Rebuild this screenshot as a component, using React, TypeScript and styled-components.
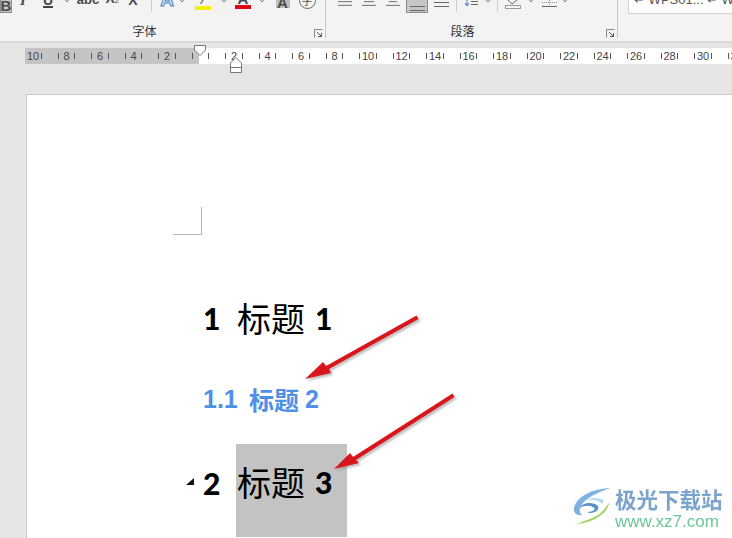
import React from "react";
import styled, { createGlobalStyle } from "styled-components";

const GlobalStyle = createGlobalStyle`
  html, body {
    margin: 0;
    padding: 0;
    background: #e6e6e6;
  }
`;

const CJK = `"Noto Sans CJK SC", sans-serif`;

const Screen = styled.div`
  position: relative;
  width: 732px;
  height: 538px;
  overflow: hidden;
  background: #e6e6e6;
  font-family: "Liberation Sans", ${CJK};
`;

const Ribbon = styled.div`
  display: flex;
  height: 41px;
  overflow: hidden;
  background: #f3f3f3;
  border-bottom: 2px solid #dadada;
`;

const Group = styled.div<{ $w: number }>`
  position: relative;
  display: flex;
  flex-direction: column;
  width: ${(p) => p.$w}px;
  height: 38px;
  box-sizing: border-box;
  border-right: 1px solid #c4c4c4;
`;

const ToolRow = styled.div`
  display: flex;
  align-items: flex-start;
  height: 23px;
`;

const Slot = styled.div<{ $w: number; $h?: number }>`
  display: flex;
  flex: none;
  align-items: flex-end;
  justify-content: center;
  width: ${(p) => p.$w}px;
  height: ${(p) => p.$h ?? 8}px;
  color: #444;
`;

const ActiveBox = styled.div<{ $w: number }>`
  display: flex;
  flex: none;
  align-items: flex-end;
  justify-content: center;
  width: ${(p) => p.$w}px;
  height: 13px;
  box-sizing: border-box;
  background: #c6c6c6;
  border: 1px solid #8b8b8b;
  border-top: none;
`;

const Glyph = styled.span<{ $serif?: boolean; $italic?: boolean; $size?: number; $under?: boolean; $strike?: boolean }>`
  font-family: ${(p) => (p.$serif ? `"Liberation Serif", serif` : `"Liberation Sans", sans-serif`)};
  font-style: ${(p) => (p.$italic ? "italic" : "normal")};
  font-weight: 700;
  font-size: ${(p) => p.$size ?? 14}px;
  line-height: 12px;
  color: #4a4a4a;
  text-decoration: ${(p) => (p.$strike ? "line-through" : "none")};
  border-bottom: ${(p) => (p.$under ? "2px solid #444" : "none")};
`;

const Sub = styled.span`
  font-size: 7px;
  font-weight: 400;
`;

const OutlineA = styled.span`
  font-family: "Liberation Sans", sans-serif;
  font-weight: 700;
  font-size: 19px;
  line-height: 14px;
  color: #d5e5f6;
  -webkit-text-stroke: 1px #4f86c6;
`;

const BarIcon = styled.div<{ $bar: string; $w?: number }>`
  display: flex;
  justify-content: center;
  align-items: flex-end;
  width: ${(p) => p.$w ?? 16}px;
  height: 10px;
  border-bottom: 4px solid ${(p) => p.$bar};
`;

const GreyA = styled.span`
  width: 14px;
  height: 8px;
  text-align: center;
  background: #bdbdbd;
  font-weight: 700;
  font-size: 15px;
  line-height: 6px;
  color: #4d4d4d;
`;

const CircleChar = styled.span`
  flex: none;
  width: 15px;
  height: 15px;
  border: 1px solid #666;
  border-radius: 50%;
  text-align: center;
  font-family: ${CJK};
  font-size: 11px;
  line-height: 15px;
  color: #555;
`;

const Separator = styled.div`
  width: 1px;
  height: 12px;
  background: #cdcdcd;
`;

const GroupLabel = styled.div<{ $shift: number }>`
  padding-right: ${(p) => p.$shift}px;
  text-align: center;
  font-family: ${CJK};
  font-size: 12px;
  line-height: 15px;
  color: #333;
`;

const Launcher = styled.svg`
  position: absolute;
  right: 2px;
  bottom: 0;
`;

const StyleGallery = styled.div`
  display: flex;
  flex: none;
  gap: 13px;
  width: 104px;
  height: 14px;
  margin-left: 10px;
  padding-left: 5px;
  box-sizing: border-box;
  overflow: hidden;
  background: #fff;
  border: 1px solid #d2d2d2;
  border-top: none;
  border-right: none;
  align-items: flex-start;
`;

const StyleName = styled.span`
  flex: none;
  width: 60px;
  margin-top: -5px;
  font-size: 13px;
  line-height: 9px;
  color: #555;
  white-space: nowrap;
`;

const RulerBand = styled.div`
  height: 51px;
  padding-top: 5px;
  box-sizing: border-box;
`;

const Ruler = styled.div`
  position: relative;
  display: flex;
  height: 16px;
  margin-left: 25px;
  background: linear-gradient(to right, #c4c4c4 174px, #fff 174px);
`;

const RulerTrack = styled.div`
  display: flex;
  margin-left: -8.75px;
  overflow: visible;
`;

const RulerCell = styled.div`
  display: flex;
  flex: none;
  justify-content: space-between;
  align-items: center;
  width: 33.5px;
  padding: 0 8px;
  box-sizing: border-box;
  font-size: 11px;
  color: #444;
`;

const Tick = styled.span`
  width: 1px;
  height: 6px;
  background: #555;
`;

const Marker = styled.svg<{ $left: number; $top: number }>`
  position: absolute;
  left: ${(p) => p.$left}px;
  top: ${(p) => p.$top}px;
`;

const RulerClip = styled.div`
  display: flex;
  width: 707px;
  overflow: hidden;
`;

const Page = styled.div`
  height: 444px;
  margin-left: 26px;
  padding-top: 112px;
  box-sizing: border-box;
  background: #fff;
  border-top: 1px solid #c9c9c9;
  border-left: 1px solid #c9c9c9;
  color: #000;
`;

const CornerMark = styled.div`
  width: 29px;
  height: 28px;
  margin-left: 146px;
  box-sizing: border-box;
  border-right: 1px solid #b5b5b5;
  border-bottom: 1px solid #b5b5b5;
`;

const Headings = styled.div`
  display: flex;
  flex-direction: column;
  margin-left: 176px;
`;

const Heading = styled.div<{ $top: number }>`
  display: flex;
  align-items: center;
  height: 50px;
  margin-top: ${(p) => p.$top}px;
  white-space: nowrap;
`;

const Num = styled.span<{ $w: number; $lift?: number }>`
  flex: none;
  width: ${(p) => p.$w}px;
  margin-bottom: ${(p) => p.$lift ?? 0}px;
  font-family: "Lato", sans-serif;
  font-weight: 900;
  font-size: 30px;
`;

const Title = styled.span`
  font-family: ${CJK};
  font-weight: 400;
  font-size: 34px;
  line-height: 50px;
`;

const TitleDigit = styled.span`
  font-family: "Lato", sans-serif;
  font-weight: 900;
  font-size: 30px;
  margin-left: 10px;
`;

const BlueHeading = styled.div`
  display: flex;
  align-items: center;
  height: 30px;
  margin-top: 41px;
  color: #4f8fe6;
  font-family: "Liberation Sans", ${CJK};
  font-weight: 700;
  font-size: 25px;
  white-space: nowrap;
`;

const BlueNum = styled.span`
  flex: none;
  width: 46px;
`;

const BlueTitle = styled.span`
  font-family: ${CJK};
  font-size: 25px;
  margin-right: 6px;
`;

const Heading3 = styled.div`
  display: flex;
  align-items: center;
  height: 93px;
  margin-top: 30px;
  margin-left: -17px;
  white-space: nowrap;
`;

const Collapse = styled.span`
  flex: none;
  width: 0;
  height: 0;
  margin-right: 9px;
  margin-bottom: 18px;
  border-style: solid;
  border-width: 0 0 7px 8px;
  border-color: transparent transparent #111 transparent;
`;

const Shaded = styled.span`
  display: flex;
  align-items: center;
  height: 93px;
  width: 111px;
  padding: 0 0 18px 1px;
  box-sizing: border-box;
  background: #c3c3c3;
`;

const ArrowLayer = styled.svg`
  position: absolute;
  left: 0;
  top: 0;
  pointer-events: none;
`;

const Watermark = styled.div`
  position: absolute;
  left: 572px;
  top: 486px;
  display: flex;
  gap: 3px;
  filter: blur(0.5px);
`;

const WatermarkText = styled.div`
  display: flex;
  flex-direction: column;
`;

const SiteName = styled.div`
  font-family: ${CJK};
  font-weight: 700;
  font-size: 21.5px;
  line-height: 26px;
  color: #7ba3cc;
`;

const SiteUrl = styled.div`
  font-family: "Liberation Sans", sans-serif;
  font-size: 17px;
  line-height: 20px;
  color: #6cc698;
`;

const Chevron = () => (
  <svg width="8" height="5" viewBox="0 0 8 5">
    <path d="M1 0.5 L4 4 L7 0.5" fill="none" stroke="#777" strokeWidth="1" />
  </svg>
);

const LinesIcon = ({ inset = 0 }: { inset?: number }) => (
  <svg width="15" height="7" viewBox="0 0 15 7">
    <path d={`M${inset} 1.5 H${15 - inset} M0 5.5 H15`} stroke="#666" strokeWidth="1" />
  </svg>
);

const launcher = (
  <Launcher width="9" height="9" viewBox="0 0 9 9">
    <path d="M0.5 8.5 V0.5 H8.500" fill="none" stroke="#888" />
    <path d="M3 3 L7.500 7.500 M7.500 4 V7.500 H4" fill="none" stroke="#555" />
  </Launcher>
);

const numbers = [10, 8, 6, 4, 2, 0, 2, 4, 6, 8, 10, 12, 14, 16, 18, 20, 22, 24, 26, 28, 30, 32];

const Logo = () => (
  <svg width="40" height="40" viewBox="0 0 40 40">
    <path d="M38 2 C20 3 5 10 2 22 C1 27 5 30 10 29 C6 26 7 20 14 14 C20 9 30 5 38 2 Z" fill="#7fb2e0" />
    <path d="M26 20 C20 15 10 17 8 22 C12 19 19 19 22 22 C24 24 20 26 15 26 C20 29 28 25 26 20 Z" fill="#5a92c8" />
    <path d="M37 17 C36 27 22 37 4 38 C14 34 19 33 24 30 C30 27 33 22 37 17 Z" fill="#a6d46e" />
    <path d="M32 14 C28 12 20 11 14 14 C20 13 27 14 30 18 Z" fill="#b4daf0" />
  </svg>
);

const Arrow = ({ d }: { d: string }) => (
  <>
    <path d={d} fill="#8a8a8a" opacity="0.55" transform="translate(2 2)" filter="url(#arrowBlur)" />
    <path d={d} fill="#d9161c" />
  </>
);

export default function App() {
  return (
    <Screen>
      <GlobalStyle />
      <Ribbon>
        <Group $w={326}>
          <ToolRow>
            <ActiveBox $w={12}>
              <Glyph $size={15}>B</Glyph>
            </ActiveBox>
            <Slot $w={22} $h={6}><Glyph $serif $italic $size={15}>I</Glyph></Slot>
            <Slot $w={28} $h={8}><Glyph $under $size={14}>U</Glyph></Slot>
            <Slot $w={10} $h={3}><Chevron /></Slot>
            <Slot $w={32} $h={6}><Glyph $strike $size={13}>abc</Glyph></Slot>
            <Slot $w={16} $h={7}><Glyph $size={14}>X<Sub>2</Sub></Glyph></Slot>
            <Slot $w={26} $h={6}><Glyph $size={14}>X</Glyph></Slot>
            <Slot $w={10} $h={12}><Separator /></Slot>
            <Slot $w={22} $h={7}><OutlineA>A</OutlineA></Slot>
            <Slot $w={8} $h={3}><Chevron /></Slot>
            <Slot $w={34} $h={10}>
              <BarIcon $bar="#f4f000"><Glyph $size={11}>⁄</Glyph></BarIcon>
            </Slot>
            <Slot $w={8} $h={3}><Chevron /></Slot>
            <Slot $w={30} $h={9}>
              <BarIcon $bar="#e00512"><Glyph $size={15}>A</Glyph></BarIcon>
            </Slot>
            <Slot $w={8} $h={3}><Chevron /></Slot>
            <Slot $w={33} $h={8}><GreyA>A</GreyA></Slot>
            <Slot $w={16} $h={9}><CircleChar>字</CircleChar></Slot>
          </ToolRow>
          <GroupLabel $shift={36}>字体</GroupLabel>
          {launcher}
        </Group>
        <Group $w={292}>
          <ToolRow>
            <Slot $w={12} />
            <Slot $w={14} $h={7}><LinesIcon inset={0} /></Slot>
            <Slot $w={10} />
            <Slot $w={14} $h={7}><LinesIcon inset={2} /></Slot>
            <Slot $w={10} />
            <Slot $w={14} $h={7}><LinesIcon inset={3} /></Slot>
            <Slot $w={6} />
            <ActiveBox $w={22}><LinesIcon /></ActiveBox>
            <Slot $w={5} />
            <Slot $w={16} $h={8}><LinesIcon /></Slot>
            <Slot $w={7} />
            <Slot $w={1} $h={12}><Separator /></Slot>
            <Slot $w={7} />
            <Slot $w={14} $h={7}>
              <svg width="14" height="8" viewBox="0 0 14 8">
                <path d="M3 0 V6 M1 4 L3 7 L5 4" fill="none" stroke="#3f7fbf" />
                <path d="M7 2.500 H14 M7 5.500 H14" stroke="#666" />
              </svg>
            </Slot>
            <Slot $w={6} />
            <Slot $w={8} $h={3}><Chevron /></Slot>
            <Slot $w={5} />
            <Slot $w={1} $h={12}><Separator /></Slot>
            <Slot $w={7} />
            <Slot $w={16} $h={9}>
              <svg width="16" height="9" viewBox="0 0 16 9">
                <path d="M3 0 L7 4 L12 0" fill="none" stroke="#666" />
                <rect x="0.5" y="5.5" width="15" height="3" fill="#f3f3f3" stroke="#999" />
              </svg>
            </Slot>
            <Slot $w={6} />
            <Slot $w={8} $h={3}><Chevron /></Slot>
            <Slot $w={7} />
            <Slot $w={15} $h={7}>
              <svg width="15" height="7" viewBox="0 0 15 7">
                <path d="M0 6.5 H15" stroke="#666" />
                <path d="M0 2.5 H15 M7.5 0 V6" stroke="#999" strokeDasharray="1 1" />
              </svg>
            </Slot>
            <Slot $w={4} />
            <Slot $w={8} $h={3}><Chevron /></Slot>
          </ToolRow>
          <GroupLabel $shift={18}>段落</GroupLabel>
          {launcher}
        </Group>
        <StyleGallery>
          <StyleName>↵ WPS01...</StyleName>
          <StyleName>↵ WPS正文</StyleName>
        </StyleGallery>
      </Ribbon>

      <RulerBand>
        <Ruler>
          <RulerClip>
            <RulerTrack>
              {numbers.map((n, i) => (
                <RulerCell key={i}>
                  <Tick />
                  {n > 0 ? <span>{n}</span> : null}
                  <Tick />
                </RulerCell>
              ))}
            </RulerTrack>
          </RulerClip>
          <Marker $left={169} $top={-3} width="12" height="11" viewBox="0 0 12 11">
            <path d="M0.5 0.5 H11.5 V5 L6 10.5 L0.5 5 Z" fill="#fff" stroke="#777" />
          </Marker>
          <Marker $left={205} $top={9} width="12" height="16" viewBox="0 0 12 16">
            <path d="M0.5 15.5 V6 L6 0.5 L11.5 6 V15.5 Z M0.5 10.5 H11.5" fill="#fff" stroke="#777" />
          </Marker>
        </Ruler>
      </RulerBand>

      <Page>
        <CornerMark />
        <Headings>
          <Heading $top={58}>
            <Num $w={34}>1</Num>
            <Title>标题</Title>
            <TitleDigit>1</TitleDigit>
          </Heading>
          <BlueHeading>
            <BlueNum>1.1</BlueNum>
            <BlueTitle>标题</BlueTitle>
            2
          </BlueHeading>
          <Heading3>
            <Collapse />
            <Num $w={33} $lift={16}>2</Num>
            <Shaded>
              <Title>标题</Title>
              <TitleDigit>3</TitleDigit>
            </Shaded>
          </Heading3>
        </Headings>
      </Page>

      <ArrowLayer width="732" height="538" viewBox="0 0 732 538">
        <defs>
          <filter id="arrowBlur" x="-20%" y="-20%" width="140%" height="140%">
            <feGaussianBlur stdDeviation="1.2" />
          </filter>
        </defs>
        <Arrow d="M305 379 L323 362 L326 366 L416.500 315.500 L418.500 319 L329 369 L331 373 Z" />
        <Arrow d="M334 469 L350 453 L353 457 L452.500 393.500 L454.500 397 L356 460 L359 463 Z" />
      </ArrowLayer>

      <Watermark>
        <Logo />
        <WatermarkText>
          <SiteName>极光下载站</SiteName>
          <SiteUrl>www.xz7.com</SiteUrl>
        </WatermarkText>
      </Watermark>
    </Screen>
  );
}
